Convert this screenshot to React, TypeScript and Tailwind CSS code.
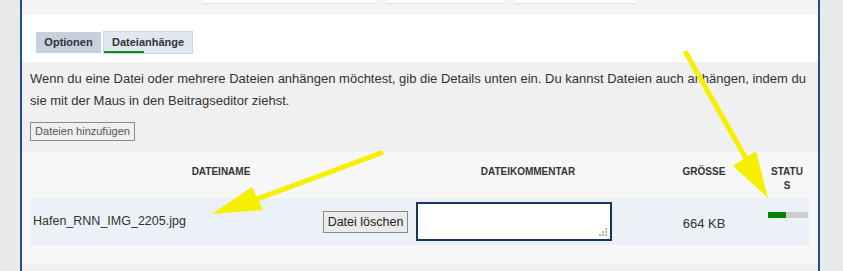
import React from 'react';

const sans = { fontFamily: '"Liberation Sans", Arial, sans-serif' };

const ResizeGrip: React.FC = () => (
  <svg className="absolute right-[3px] bottom-[3px]" width="8" height="8" viewBox="0 0 8 8">
    {[
      [6, 0],
      [3, 3],
      [6, 3],
      [0, 6],
      [3, 6],
      [6, 6],
    ].map(([x, y], i) => (
      <rect key={i} x={x} y={y} width="2" height="2" fill="#b8b8b8" />
    ))}
  </svg>
);

const App: React.FC = () => {
  return (
    <div className="relative flex w-[843px] h-[271px] overflow-hidden bg-[#e9e9e9] text-[#333]" style={sans}>
      <div className="w-[20px] shrink-0" />

      <div className="w-[800px] shrink-0 flex flex-col border-x-2 border-[#1f4f8f] bg-white">
        {/* top strip with input edges */}
        <div className="h-[15px] bg-[#f5f5f5] flex gap-[10px] pl-[181px]">
          <div className="w-[173px] h-[3px] bg-white shadow-[0_1px_1px_#ddd]" />
          <div className="w-[119px] h-[3px] bg-white shadow-[0_1px_1px_#ddd]" />
          <div className="w-[121px] h-[3px] bg-white shadow-[0_1px_1px_#ddd]" />
        </div>

        {/* tabs */}
        <div className="h-[47px] bg-white pl-[14px] pt-[16px] flex items-start gap-[2px]">
          <div className="mt-[1px] h-[21px] w-[65px] bg-[#c5d2de] flex items-center justify-center text-[11px] font-bold text-[#333]">
            Optionen
          </div>
          <div className="h-[23px] w-[90px] bg-[#e0e9f2] border border-[#cbd8e4] flex flex-col items-start pl-[8px] pt-[3px] text-[11px] font-bold text-[#333]">
            <span className="leading-[14px]">Dateianhänge</span>
            <span className="-ml-[8px] mt-[2px] w-[40px] h-[2px] bg-[#168a16]" />
          </div>
        </div>

        {/* description */}
        <div className="h-[90px] bg-[#f0f0f0] px-[8px] pt-[6px]">
          <p className="text-[13px] leading-[22px] text-[#333]">
            Wenn du eine Datei oder mehrere Dateien anhängen möchtest, gib die Details unten ein. Du kannst Dateien auch anhängen, indem du sie mit der Maus in den Beitragseditor ziehst.
          </p>
          <button className="mt-[10px] h-[19px] w-[105px] border border-[#8a8a8a] bg-[#efefef] text-[11px] text-[#555] leading-none whitespace-nowrap">
            Dateien hinzufügen
          </button>
        </div>

        {/* table */}
        <div className="h-[112px] bg-[#f7f7f7] px-[8px]">
          <div className="grid grid-cols-[382px_232px_120px_46px] h-[46px] text-[10px] font-bold text-[#333] leading-[14px] pt-[13px]">
            <div className="text-center">DATEINAME</div>
            <div className="text-center">DATEIKOMMENTAR</div>
            <div className="text-center">GRÖSSE</div>
            <div className="flex justify-center">
              <span className="w-[36px] text-center break-all">STATUS</span>
            </div>
          </div>

          <div className="grid grid-cols-[382px_232px_120px_46px] h-[47px] bg-[#ebf1f6] text-[13px] text-[#333]">
            <div className="flex items-start justify-between pl-[3px] pr-[4px]">
              <span className="mt-[15px] leading-[16px] text-[12.5px]">Hafen_RNN_IMG_2205.jpg</span>
              <button className="mt-[13px] h-[22px] w-[85px] border border-[#8a8a8a] bg-[#ebebeb] text-[12.5px] text-[#222] leading-none whitespace-nowrap">
                Datei löschen
              </button>
            </div>
            <div className="pl-[4px] pt-[4px]">
              <div className="relative w-[196px] h-[39px] bg-white border-2 border-[#17365a]">
                <ResizeGrip />
              </div>
            </div>
            <div className="flex justify-center items-start pt-[18px] leading-[16px]">664 KB</div>
            <div className="pl-[4px] pt-[14px]">
              <div className="flex w-[40px] h-[6px] bg-[#cdcdcd]">
                <div className="w-[18px] h-full bg-[#0a800a]" />
              </div>
            </div>
          </div>
        </div>

        <div className="flex-1 bg-[#efefef]" />
      </div>

      <div className="flex-1" />

      {/* yellow annotation arrows */}
      <svg className="absolute inset-0 pointer-events-none" width="843" height="271" viewBox="0 0 843 271">
        <line x1="381" y1="153" x2="252" y2="201" stroke="#f6ef00" strokeWidth="5" strokeLinecap="round" />
        <polygon points="212,214 252,187 263,210" fill="#f6ef00" />
        <line x1="686" y1="53" x2="748" y2="162" stroke="#f6ef00" strokeWidth="5" strokeLinecap="round" />
        <polygon points="768,198 733,166 756,151" fill="#f6ef00" />
      </svg>
    </div>
  );
};

export default App;
